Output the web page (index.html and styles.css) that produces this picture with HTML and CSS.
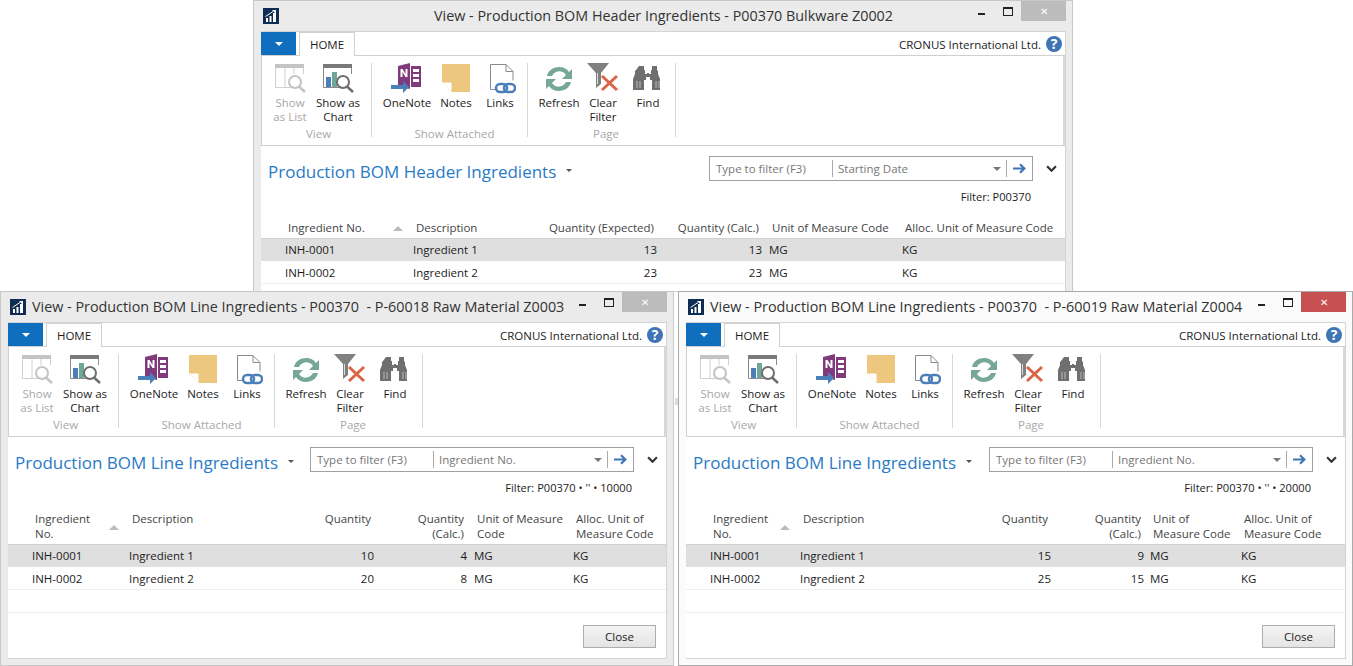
FILE: index.html
```html
<!DOCTYPE html>
<html lang="en">
<head>
  <meta charset="UTF-8" />
  <title>Production BOM Ingredients</title>
  <link rel="stylesheet" href="styles.css">
</head>
<body>

<svg class="defs" width="0" height="0">
  <symbol id="i-app" viewBox="0 0 16 16">
    <rect width="16" height="16" fill="#0f2c52"/>
    <path d="M3 14v-4h2v4zM6.500 14V8h2v6zM10 14V5h3v9z" fill="#fff"/>
    <path d="M2.500 8.500 10 3.500" stroke="#fff" fill="none"/>
    <path d="M9 2h4v4z" fill="#fff"/>
  </symbol>
  <symbol id="i-list" viewBox="0 0 32 32">
    <path d="M1 1h29v4H1z" fill="#c4c4c4"/>
    <path d="M1.500 5v19.500h18M11 5v19.500M20 5v6M29.500 5v6" fill="none" stroke="#cfcfcf"/>
    <circle cx="21" cy="19" r="6" fill="#fff" stroke="#c4c4c4" stroke-width="2"/>
    <path d="M25 23.500 31 29" stroke="#c4c4c4" stroke-width="2.500"/>
  </symbol>
  <symbol id="i-chart" viewBox="0 0 32 32">
    <path d="M1 1h29v4H1z" fill="#7a7a7a"/>
    <path d="M1.500 5v19.500h18M29.500 5v6" fill="none" stroke="#8a8a8a"/>
    <path d="M4 14h5v10H4z" fill="#4a7fb8"/>
    <path d="M10 9h5v15h-5z" fill="#6fa89a"/>
    <circle cx="21" cy="19" r="6" fill="#fff" stroke="#6e6e6e" stroke-width="2"/>
    <path d="M25 23.500 31 29" stroke="#6e6e6e" stroke-width="2.500"/>
  </symbol>
  <symbol id="i-onenote" viewBox="0 0 32 32">
    <path d="M7 3 19 0v26L7 23z" fill="#80397b"/>
    <path d="M20 3h10v21H20z" fill="#80397b"/>
    <path d="M22 6h6v3h-6zM22 11h6v3h-6zM22 16h6v3h-6z" fill="#fff"/>
    <path d="M9.500 14V6h2l3 5V6h2v8h-2l-3-5v5z" fill="#fff"/>
    <path d="M1 24h12v-4l6 6-6 6v-4H1z" fill="#4a7fb8" transform="translate(-1 -2)"/>
  </symbol>
  <symbol id="i-notes" viewBox="0 0 32 32">
    <path d="M2 1h28v28H12L2 19z" fill="#eec77e"/>
    <path d="M2 19h10v10z" fill="#fff"/>
    <path d="M2 19h10v10" fill="none" stroke="#eec77e"/>
  </symbol>
  <symbol id="i-links" viewBox="0 0 32 32">
    <path d="M11 26.500H6.500V1.500H22l7 7v9" fill="none" stroke="#8a8a8a"/>
    <path d="M22 1.500v7h7" fill="none" stroke="#8a8a8a"/>
    <rect x="12" y="21" width="11" height="8" rx="4" fill="none" stroke="#4a7fb8" stroke-width="2.500"/>
    <rect x="20" y="21" width="11" height="8" rx="4" fill="none" stroke="#4a7fb8" stroke-width="2.500"/>
  </symbol>
  <symbol id="i-refresh" viewBox="0 0 32 32">
    <path d="M4 13C6 3 21 1 26 9l3-3v10H19l4-4c-3-5-11-5-14 1z" fill="#76a797"/>
    <path d="M28 19c-2 10-17 12-22 4l-3 3V16h10l-4 4c3 5 11 5 14-1z" fill="#76a797"/>
  </symbol>
  <symbol id="i-clear" viewBox="0 0 32 32">
    <path d="M0 0h22l-8 10v11l-5 4V10z" fill="#808080"/>
    <path d="M10.500 10v11" stroke="#ddd"/>
    <path d="M15 27 30 13M15 13l15 14" stroke="#dc6445" stroke-width="3" fill="none"/>
  </symbol>
  <symbol id="i-find" viewBox="0 0 32 32">
    <path d="M7 3h5v4h1v4h2v-1h2v1h2V7h1V3h5v4l1 1v3l2 5v11H20V17h-2v-3h-4v3h-2v10H1V16l2-5V8l1-1z" fill="#6f6f6f"/>
    <path d="M5 18v7M8 18v7M24 18v7M27 18v7" stroke="#bbb"/>
  </symbol>
</svg>

<div class="backline"></div>

<!-- header window -->
<section class="win win-head">
  <header class="titlebar titlebar-center">
    <svg class="appicon"><use href="#i-app"/></svg>
    <span class="wintitle">View - Production BOM Header Ingredients - P00370 Bulkware Z0002</span>
    <div class="controls">
      <span class="c-min"></span>
      <span class="c-max"></span>
      <span class="c-close">✕</span>
    </div>
  </header>
  <div class="inner">
    <div class="tabrow">
      <span class="filebtn"><i class="caret-white"></i></span>
      <span class="tab">HOME</span>
      <span class="company">CRONUS International Ltd.</span>
      <span class="help">?</span>
    </div>
    <div class="ribbon">
      <div class="group g-view">
        <div class="btns">
          <div class="rbtn off"><svg><use href="#i-list"/></svg><span>Show<br>as List</span></div>
          <div class="rbtn"><svg><use href="#i-chart"/></svg><span>Show as<br>Chart</span></div>
        </div>
        <div class="glabel">View</div>
      </div>
      <div class="group g-att">
        <div class="btns">
          <div class="rbtn"><svg><use href="#i-onenote"/></svg><span>OneNote</span></div>
          <div class="rbtn"><svg><use href="#i-notes"/></svg><span>Notes</span></div>
          <div class="rbtn"><svg><use href="#i-links"/></svg><span>Links</span></div>
        </div>
        <div class="glabel">Show Attached</div>
      </div>
      <div class="group g-page">
        <div class="btns">
          <div class="rbtn"><svg><use href="#i-refresh"/></svg><span>Refresh</span></div>
          <div class="rbtn"><svg><use href="#i-clear"/></svg><span>Clear<br>Filter</span></div>
          <div class="rbtn"><svg><use href="#i-find"/></svg><span>Find</span></div>
        </div>
        <div class="glabel">Page</div>
      </div>
    </div>
    <div class="listhead">
      <div class="toprow">
        <h2>Production BOM Header Ingredients</h2>
        <i class="caret-dark"></i>
        <div class="filterbox">
          <span class="f-type">Type to filter (F3)</span>
          <span class="f-field">Starting Date</span>
          <i class="caret-gray"></i>
          <span class="f-go"><svg viewBox="0 0 12 10"><path d="M0 5h10M6.500 1l4 4-4 4" fill="none" stroke="#3f74b5" stroke-width="2"/></svg></span>
        </div>
        <svg class="chev" viewBox="0 0 10 6"><path d="M1 1l4 4 4-4" fill="none" stroke="#333" stroke-width="2"/></svg>
      </div>
      <div class="filtertext">Filter: P00370</div>
    </div>
    <div class="grid cols-head">
      <div class="row hrow">
        <span></span><span class="hc hc-sort">Ingredient No.<i class="sortup"></i></span>
        <span class="hc">Description</span>
        <span class="hc num">Quantity (Expected)</span>
        <span class="hc num">Quantity (Calc.)</span>
        <span></span><span class="hc">Unit of Measure Code</span>
        <span class="hc">Alloc. Unit of Measure Code</span>
      </div>
      <div class="row sel">
        <span></span><span>INH-0001</span><span>Ingredient 1</span><span class="num">13</span><span class="num">13</span><span></span><span>MG</span><span>KG</span>
      </div>
      <div class="row">
        <span></span><span>INH-0002</span><span>Ingredient 2</span><span class="num">23</span><span class="num">23</span><span></span><span>MG</span><span>KG</span>
      </div>
    </div>
  </div>
</section>

<!-- line window Z0003 -->
<section class="win win-left">
  <header class="titlebar">
    <svg class="appicon"><use href="#i-app"/></svg>
    <span class="wintitle">View - Production BOM Line Ingredients - P00370 &nbsp;- P-60018 Raw Material Z0003</span>
    <div class="controls">
      <span class="c-min"></span>
      <span class="c-max"></span>
      <span class="c-close">✕</span>
    </div>
  </header>
  <div class="inner">
    <div class="tabrow">
      <span class="filebtn"><i class="caret-white"></i></span>
      <span class="tab">HOME</span>
      <span class="company">CRONUS International Ltd.</span>
      <span class="help">?</span>
    </div>
    <div class="ribbon">
      <div class="group g-view">
        <div class="btns">
          <div class="rbtn off"><svg><use href="#i-list"/></svg><span>Show<br>as List</span></div>
          <div class="rbtn"><svg><use href="#i-chart"/></svg><span>Show as<br>Chart</span></div>
        </div>
        <div class="glabel">View</div>
      </div>
      <div class="group g-att">
        <div class="btns">
          <div class="rbtn"><svg><use href="#i-onenote"/></svg><span>OneNote</span></div>
          <div class="rbtn"><svg><use href="#i-notes"/></svg><span>Notes</span></div>
          <div class="rbtn"><svg><use href="#i-links"/></svg><span>Links</span></div>
        </div>
        <div class="glabel">Show Attached</div>
      </div>
      <div class="group g-page">
        <div class="btns">
          <div class="rbtn"><svg><use href="#i-refresh"/></svg><span>Refresh</span></div>
          <div class="rbtn"><svg><use href="#i-clear"/></svg><span>Clear<br>Filter</span></div>
          <div class="rbtn"><svg><use href="#i-find"/></svg><span>Find</span></div>
        </div>
        <div class="glabel">Page</div>
      </div>
    </div>
    <div class="listhead">
      <div class="toprow">
        <h2>Production BOM Line Ingredients</h2>
        <i class="caret-dark"></i>
        <div class="filterbox">
          <span class="f-type">Type to filter (F3)</span>
          <span class="f-field">Ingredient No.</span>
          <i class="caret-gray"></i>
          <span class="f-go"><svg viewBox="0 0 12 10"><path d="M0 5h10M6.500 1l4 4-4 4" fill="none" stroke="#3f74b5" stroke-width="2"/></svg></span>
        </div>
        <svg class="chev" viewBox="0 0 10 6"><path d="M1 1l4 4 4-4" fill="none" stroke="#333" stroke-width="2"/></svg>
      </div>
      <div class="filtertext">Filter: P00370 • '' • 10000</div>
    </div>
    <div class="grid cols-left">
      <div class="row hrow">
        <span></span><span class="hc hc-sort">Ingredient<br>No.<i class="sortup"></i></span>
        <span class="hc">Description</span>
        <span class="hc num">Quantity</span>
        <span class="hc num">Quantity<br>(Calc.)</span>
        <span></span><span class="hc">Unit of Measure<br>Code</span>
        <span class="hc">Alloc. Unit of<br>Measure Code</span>
      </div>
      <div class="row sel">
        <span></span><span>INH-0001</span><span>Ingredient 1</span><span class="num">10</span><span class="num">4</span><span></span><span>MG</span><span>KG</span>
      </div>
      <div class="row">
        <span></span><span>INH-0002</span><span>Ingredient 2</span><span class="num">20</span><span class="num">8</span><span></span><span>MG</span><span>KG</span>
      </div>
      <div class="row"></div>
    </div>
    <div class="foot"><button class="closebtn">Close</button></div>
  </div>
</section>

<!-- line window Z0004, active one -->
<section class="win win-right active">
  <header class="titlebar">
    <svg class="appicon"><use href="#i-app"/></svg>
    <span class="wintitle">View - Production BOM Line Ingredients - P00370 &nbsp;- P-60019 Raw Material Z0004</span>
    <div class="controls">
      <span class="c-min"></span>
      <span class="c-max"></span>
      <span class="c-close">✕</span>
    </div>
  </header>
  <div class="inner">
    <div class="tabrow">
      <span class="filebtn"><i class="caret-white"></i></span>
      <span class="tab">HOME</span>
      <span class="company">CRONUS International Ltd.</span>
      <span class="help">?</span>
    </div>
    <div class="ribbon">
      <div class="group g-view">
        <div class="btns">
          <div class="rbtn off"><svg><use href="#i-list"/></svg><span>Show<br>as List</span></div>
          <div class="rbtn"><svg><use href="#i-chart"/></svg><span>Show as<br>Chart</span></div>
        </div>
        <div class="glabel">View</div>
      </div>
      <div class="group g-att">
        <div class="btns">
          <div class="rbtn"><svg><use href="#i-onenote"/></svg><span>OneNote</span></div>
          <div class="rbtn"><svg><use href="#i-notes"/></svg><span>Notes</span></div>
          <div class="rbtn"><svg><use href="#i-links"/></svg><span>Links</span></div>
        </div>
        <div class="glabel">Show Attached</div>
      </div>
      <div class="group g-page">
        <div class="btns">
          <div class="rbtn"><svg><use href="#i-refresh"/></svg><span>Refresh</span></div>
          <div class="rbtn"><svg><use href="#i-clear"/></svg><span>Clear<br>Filter</span></div>
          <div class="rbtn"><svg><use href="#i-find"/></svg><span>Find</span></div>
        </div>
        <div class="glabel">Page</div>
      </div>
    </div>
    <div class="listhead">
      <div class="toprow">
        <h2>Production BOM Line Ingredients</h2>
        <i class="caret-dark"></i>
        <div class="filterbox">
          <span class="f-type">Type to filter (F3)</span>
          <span class="f-field">Ingredient No.</span>
          <i class="caret-gray"></i>
          <span class="f-go"><svg viewBox="0 0 12 10"><path d="M0 5h10M6.500 1l4 4-4 4" fill="none" stroke="#3f74b5" stroke-width="2"/></svg></span>
        </div>
        <svg class="chev" viewBox="0 0 10 6"><path d="M1 1l4 4 4-4" fill="none" stroke="#333" stroke-width="2"/></svg>
      </div>
      <div class="filtertext">Filter: P00370 • '' • 20000</div>
    </div>
    <div class="grid cols-right">
      <div class="row hrow">
        <span></span><span class="hc hc-sort">Ingredient<br>No.<i class="sortup"></i></span>
        <span class="hc">Description</span>
        <span class="hc num">Quantity</span>
        <span class="hc num">Quantity<br>(Calc.)</span>
        <span></span><span class="hc">Unit of<br>Measure Code</span>
        <span class="hc">Alloc. Unit of<br>Measure Code</span>
      </div>
      <div class="row sel">
        <span></span><span>INH-0001</span><span>Ingredient 1</span><span class="num">15</span><span class="num">9</span><span></span><span>MG</span><span>KG</span>
      </div>
      <div class="row">
        <span></span><span>INH-0002</span><span>Ingredient 2</span><span class="num">25</span><span class="num">15</span><span></span><span>MG</span><span>KG</span>
      </div>
      <div class="row"></div>
    </div>
    <div class="foot"><button class="closebtn">Close</button></div>
  </div>
</section>

</body>
</html>
```

FILE: styles.css
```css
html, body {
  margin: 0;
  height: 100%;
  overflow: hidden;
  background: #fff;
}
body {
  font-family: "Open Sans", "Liberation Sans", sans-serif;
  font-size: 11.5px;
  color: #1c1c1c;
}
.defs {
  position: absolute;
}

/* bit of a window further back, seen between the two lower ones */
.backline {
  position: absolute;
  left: 675px;
  top: 398px;
  width: 3px;
  height: 7px;
  background: #dcdcdc;
}

/* windows on the desktop */
.win {
  position: absolute;
  box-sizing: border-box;
  display: flex;
  flex-direction: column;
  background: #ebebeb;
  border: 1px solid #c8c8c8;
  padding: 0 6px 6px 7px;
}
.win-head {
  left: 253px;
  top: 0;
  width: 820px;
  height: 292px;
  border-bottom: 0;
  padding-bottom: 0;
}
.win-left {
  left: 0;
  top: 291px;
  width: 674px;
  height: 375px;
}
.win-right {
  left: 678px;
  top: 291px;
  width: 675px;
  height: 375px;
}
.win.active {
  background: #fbfbfb;
  border-color: #aaa;
}

.titlebar {
  height: 30px;
  flex: none;
  display: flex;
  align-items: center;
  position: relative;
}
.appicon {
  width: 16px;
  height: 16px;
  margin: 0 6px 0 2px;
  flex: none;
}
.wintitle {
  font-size: 14.35px;
  color: #333;
  white-space: nowrap;
  margin-top: -1px;
}
.titlebar-center .wintitle {
  flex: 1;
  text-align: center;
  padding-right: 24px;
}
.controls {
  position: absolute;
  right: 0;
  top: 0;
  display: flex;
}
.c-min {
  width: 7px;
  height: 2px;
  margin: 12px 18px 0 0;
  background: #222;
}
.c-max {
  box-sizing: border-box;
  width: 10px;
  height: 9px;
  margin: 6px 8px 0 0;
  border: 1px solid #222;
  border-top-width: 2px;
}
.c-close {
  width: 45px;
  height: 20px;
  background: #bcbcbc;
  color: #fff;
  font-size: 10px;
  line-height: 20px;
  text-align: center;
}
.active .c-close {
  background: #c75050;
}

.inner {
  flex: 1;
  min-height: 0;
  display: flex;
  flex-direction: column;
  background: #fff;
  border: 1px solid #d4d4d4;
  border-left: 0;
  overflow: hidden;
}

/* tab row */
.tabrow {
  height: 23px;
  flex: none;
  display: flex;
  align-items: center;
  border-bottom: 1px solid #d0d0d0;
}
.filebtn {
  width: 35px;
  height: 23px;
  background: #106ebe;
  display: flex;
  align-items: center;
  justify-content: center;
}
.caret-white {
  border: 4px solid transparent;
  border-top: 4px solid #fff;
  border-bottom: 0;
  border-left-width: 4px;
}
.tab {
  box-sizing: border-box;
  width: 56px;
  height: 24px;
  margin: 0 0 -1px 3px;
  border: 1px solid #d0d0d0;
  border-bottom: 0;
  background: #fff;
  text-align: center;
  line-height: 24px;
}
.company {
  margin-left: auto;
  margin-top: 1px;
}
.help {
  width: 16px;
  height: 16px;
  margin: 0 3px 0 5px;
  border-radius: 50%;
  background: #3f74b5;
  color: #fff;
  font-weight: bold;
  font-size: 14px;
  line-height: 16px;
  text-align: center;
}

/* ribbon */
.ribbon {
  box-sizing: border-box;
  height: 90px;
  flex: none;
  display: flex;
  padding: 7px 0 0 4px;
  border-left: 1px solid #d0d0d0;
  border-right: 2px solid #d8d8d8;
  border-bottom: 1px solid #d0d0d0;
}
.group {
  height: 74px;
  display: flex;
  flex-direction: column;
  border-right: 1px solid #d8d8d8;
}
.g-view {
  width: 105px;
}
.g-att {
  width: 156px;
  padding-left: 10px;
  box-sizing: border-box;
}
.g-page {
  width: 148px;
  padding-left: 9px;
  box-sizing: border-box;
}
.btns {
  height: 64px;
  flex: none;
  display: grid;
  align-items: start;
}
.g-view .btns {
  grid-template-columns: 48px 48px;
}
.g-att .btns {
  grid-template-columns: 50px 48px 40px;
}
.g-page .btns {
  grid-template-columns: 44px 44px 46px;
}
.rbtn {
  display: flex;
  flex-direction: column;
  align-items: center;
  text-align: center;
  line-height: 13.5px;
  white-space: nowrap;
}
.rbtn svg {
  width: 32px;
  height: 32px;
  margin-bottom: 1px;
}
.rbtn.off {
  color: #a8a8a8;
}
.glabel {
  text-align: center;
  color: #a8a8a8;
  line-height: 14px;
}

/* list title and filter */
.listhead {
  flex: none;
  height: 74px;
  box-sizing: border-box;
  padding: 10px 0 0 7px;
}
.toprow {
  display: flex;
  align-items: center;
  height: 25px;
}
.toprow h2 {
  margin: 0;
  padding-top: 5px;
  font-size: 17px;
  font-weight: normal;
  color: #2a7ac6;
  white-space: nowrap;
}
.caret-dark {
  margin: 3px 0 0 10px;
  border: 3px solid transparent;
  border-top: 3px solid #555;
  border-bottom: 0;
}
.filterbox {
  box-sizing: border-box;
  flex: none;
  width: 324px;
  height: 25px;
  margin-left: auto;
  display: flex;
  align-items: center;
  border: 1px solid #a0a0a0;
  color: #777;
}
.f-type {
  box-sizing: border-box;
  width: 123px;
  padding-left: 6px;
  border-right: 1px solid #aaa;
  line-height: 17px;
}
.f-field {
  flex: 1;
  padding-left: 5px;
}
.caret-gray {
  border: 4px solid transparent;
  border-top: 4px solid #777;
  border-bottom: 0;
  margin-right: 5px;
}
.f-go {
  width: 25px;
  height: 17px;
  border-left: 1px solid #aaa;
  display: flex;
  align-items: center;
  justify-content: center;
}
.f-go svg {
  width: 13px;
  height: 11px;
}
.chev {
  flex: none;
  width: 11px;
  height: 7px;
  margin: 0 8px 0 13px;
}
.filtertext {
  text-align: right;
  font-size: 11.1px;
  margin: 8px 34px 0 0;
}

/* grid */
.row {
  display: grid;
  height: 23px;
  align-items: center;
  border-bottom: 1px solid #eee;
  box-sizing: border-box;
}
.cols-head .row {
  grid-template-columns: 24px 128px 130px 114px 105px 7px 133px 1fr;
}
.cols-left .row {
  grid-template-columns: 24px 97px 100px 145px 93px 7px 99px 1fr;
}
.cols-right .row {
  grid-template-columns: 24px 90px 106px 145px 93px 6px 91px 1fr;
}
.cols-head .hrow {
  height: 18px;
}
.hrow {
  height: 33px;
  align-items: start;
  border-bottom: 0;
  line-height: 15px;
  color: #444;
}
.sel {
  background: #dfdfdf;
  border-top: 1px solid #d0d0d0;
  border-bottom: 0;
  padding-bottom: 2px;
}
.hc {
  padding: 0 3px;
  white-space: nowrap;
}
.hc-sort {
  position: relative;
  align-self: stretch;
}
.sortup {
  position: absolute;
  right: 10px;
  top: 50%;
  margin-top: -3px;
  border: 5px solid transparent;
  border-bottom: 5px solid #bbb;
  border-top: 0;
}
.num {
  text-align: right;
}

.foot {
  margin-top: auto;
  display: flex;
  justify-content: flex-end;
  padding: 0 10px 10px 0;
}
.closebtn {
  box-sizing: border-box;
  width: 73px;
  height: 23px;
  font: inherit;
  color: #222;
  background: linear-gradient(#f4f4f4, #e4e4e4);
  border: 1px solid #adadad;
}
```
